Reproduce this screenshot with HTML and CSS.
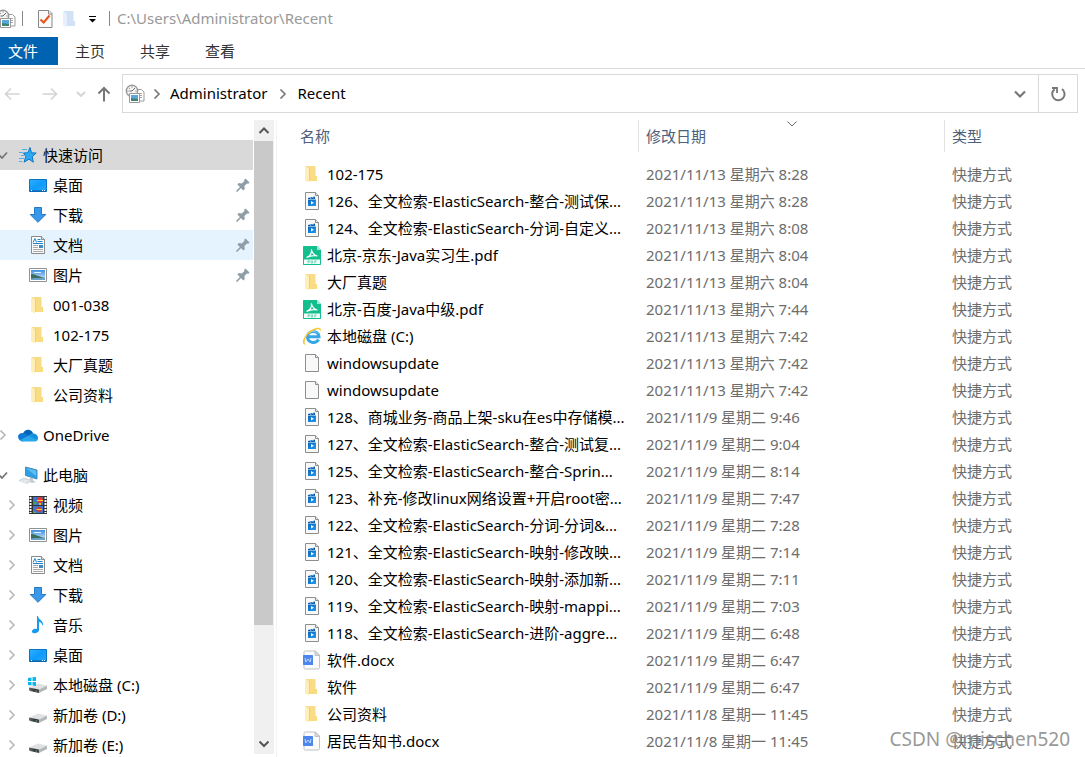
FILE: index.html
```html
<!DOCTYPE html>
<html lang="zh-CN">
<head>
<meta charset="utf-8">
<title>Recent</title>
<link rel="stylesheet" href="styles.css">
</head>
<body>
<svg class="sprite" aria-hidden="true">
  <defs>
    <linearGradient id="g-folder" x1="0" y1="0" x2="1" y2="1"><stop offset="0" stop-color="#f6dc8e"/><stop offset="1" stop-color="#fbdc7c"/></linearGradient>
    <linearGradient id="g-blue" x1="0" y1="0" x2="1" y2="1"><stop offset="0" stop-color="#2fb0ff"/><stop offset=".5" stop-color="#0f9bfb"/><stop offset="1" stop-color="#2aa7fb"/></linearGradient>
    <linearGradient id="g-sky" x1="0" y1="0" x2="0" y2="1"><stop offset="0" stop-color="#3f8fe0"/><stop offset="1" stop-color="#d9ecf8"/></linearGradient>
    <linearGradient id="g-disk" x1="0" y1="0" x2="1" y2="0"><stop offset="0" stop-color="#6b6f72"/><stop offset=".6" stop-color="#2f3336"/><stop offset="1" stop-color="#45494c"/></linearGradient>
    <linearGradient id="g-clip" x1="0" y1="0" x2="1" y2="1"><stop offset="0" stop-color="#0a66bd"/><stop offset="1" stop-color="#1c9bf0"/></linearGradient>
  </defs>
  <symbol id="i-folder" viewBox="0 0 20 20"><path d="M4 2h9.500v10H15v5H4z" fill="url(#g-folder)"/><path d="M3 2l4 2.500v14L3 16.500z" fill="#ffeeb8"/><path d="M7.500 4v13" stroke="#f0cf78"/></symbol>
  <symbol id="i-folder-pale" viewBox="0 0 20 20"><path d="M4 2h9.500v10H15v5H4z" fill="#d2e1f6"/><path d="M3 2l4 2.500v14L3 16.500z" fill="#e6effb"/></symbol>
  <symbol id="i-star" viewBox="0 0 20 20"><path d="M12 2.500l1.500 5.300 4.700.2-3.900 3.500 1 5.700-4.300-3-5 3 1.800-5.700L5.500 8l4.300-.2z" fill="#2da8f2" stroke="#0c78c7"/><path d="M4 4.500h5M1 7.500h4M3 10.500h3M1 13.500h5M1 16.500h3" stroke="#53aee8"/></symbol>
  <symbol id="i-desktop" viewBox="0 0 20 20"><path d="M1.500 4.500h17v12h-17z" fill="url(#g-blue)" stroke="#0a73c2"/><path d="M2 16h16" stroke="#075b9d"/><path d="M3 15.500h1M14 15.500h1M16 15.500h1" stroke="#fff"/></symbol>
  <symbol id="i-down" viewBox="0 0 20 20"><path d="M6.500 2.500h7v7h4.300L10 17.300 2.200 9.500h4.300z" fill="#3a98ea" stroke="#2579c4"/></symbol>
  <symbol id="i-doc" viewBox="0 0 20 20"><path d="M3.500 1.500h10l3 3v14h-13z" fill="#fbfbfb" stroke="#8a8a8a"/><path d="M13.500 1.500v3h3" fill="#ddd" stroke="#8a8a8a"/><path d="M5 7.500l2-4 1.500 4M9.500 4.500h3M9.500 6.500h5" fill="none" stroke="#2186cf"/><path d="M5 8.500h10" stroke="#2186cf"/><path d="M5 10.500h5M5 12.500h5M5 14.500h10M5 16.500h10" stroke="#aaa"/><path d="M11 10h4v3h-4z" fill="#3d8ec2"/></symbol>
  <symbol id="i-pic" viewBox="0 0 20 20"><path d="M1.500 3.500h17v13h-17z" fill="#fff" stroke="#919191"/><path d="M3 5h14v10H3z" fill="url(#g-sky)"/><path d="M3 9c4 0 7 2.500 14 4v1.500H3z" fill="#396e61"/><path d="M3 13.500c5-1 9 0 14-1V15H3z" fill="#6ba2c4"/><path d="M6 7.500h7" stroke="#e4f2ff"/></symbol>
  <symbol id="i-cloud" viewBox="0 0 20 20"><path d="M5 8.500C6 5 11 3 14 6.500c1 1.200 1 2 1 3.500L9 13z" fill="#0364b8"/><path d="M0 11.500C0 8.500 4 7 7 8.500l8 5-11 3C2 16 0 14 0 11.500z" fill="#0f78d4"/><path d="M12 10c3-3 7.500-1 8 3 .3 2-1 3.300-3 3.500H4.500c-1 0-2-.6-2.500-1.400z" fill="#28a8ea"/><path d="M11 11l3-2c3-1 5.500 1 6 4l-2 1.500z" fill="#1490df"/></symbol>
  <symbol id="i-pc" viewBox="0 0 20 20"><path d="M7.500 2l11.500 3v9L7.500 10.500z" fill="#2c9fe6" stroke="#4a8fb8"/><path d="M8 3l10 8V5.700z" fill="#5cc0f5"/><path d="M12 12.500l3 1v2l3 1.500-4 1-3-1.500z" fill="#c4cacd"/><path d="M1 15.500L6 13l8 2.500-5 3z" fill="#d5dadd" stroke="#c2c9cc" stroke-width=".6"/><path d="M3 15.500l6 2M5 14.500l6 2" stroke="#f4f6f7" stroke-width=".8"/></symbol>
  <symbol id="i-video" viewBox="0 0 20 20"><path d="M1 1h18v18H1z" fill="#333"/><path d="M5 2h10v8H5zM5 11h10v7H5z" fill="#3e73cf"/><path d="M2.500 2v16M17.500 2v16" stroke="#fff" stroke-width="2" stroke-dasharray="2 1"/><ellipse cx="12" cy="5" rx="3" ry="3" fill="#e43b2d"/><path d="M9 5h6v1H9zM8 14h6v1H8z" fill="#ffd128"/><path d="M11 8h2v2h-2z" fill="#f4b81f"/><circle cx="7" cy="8" r="1.500" fill="#43a83b"/><circle cx="11" cy="14.500" r="2.500" fill="#d13d32"/><path d="M9 14h5v1H9z" fill="#ffd128"/><path d="M5 16l4 2H5z" fill="#5fae4a"/></symbol>
  <symbol id="i-music" viewBox="0 0 20 20"><path d="M10 1c0 4 6 4 5 10-1-2-2-4-4-4v8c0 3-6 4.500-7 2-.6-2.500 3-4 5-3V1z" fill="#149bef"/></symbol>
  <symbol id="i-disk" viewBox="0 0 20 20"><path d="M1 12.500L10 8.500l9 2-8 4z" fill="#dfe1e3"/><path d="M1 12.500l10 2v3.500L2 16l-1-1z" fill="url(#g-disk)"/><path d="M11 14.500l8-4v3.500l-8 4z" fill="#b4b7b9"/><path d="M7.500 16h1.200" stroke="#7de07a"/></symbol>
  <symbol id="i-sysdisk" viewBox="0 0 20 20"><use href="#i-disk"/><path d="M0 3l3.500-.5v3.500H0zM4.500 2.300L8 2v4H4.500zM0 7h3.500v3.500L0 10zM4.500 7H8v4l-3.500-.4z" fill="#08b5ec"/></symbol>
  <symbol id="i-pin" viewBox="0 0 16 16"><path d="M10.500 1.500l4 4-1.200 1.200-1.300-.2-2.600 2.600.4 3-1.400 1.400-6-6 1.400-1.400 3 .4 2.600-2.600-.2-1.200z" fill="#8e9da6"/><path d="M6 10l-4.500 4.500" stroke="#8e9da6" stroke-width="1.600"/></symbol>
  <symbol id="i-page" viewBox="0 0 20 20"><path d="M3.500 1.500h10l3 3v14h-13z" fill="#f8f8f8" stroke="#8e8e8e"/><path d="M13.500 1.500v3h3" fill="#e6e6e6" stroke="#8e8e8e"/></symbol>
  <symbol id="i-clip" viewBox="0 0 20 20"><use href="#i-page"/><path d="M6 7l7-1.500V8H6z" fill="#0b58a8"/><path d="M6 8.500h8V15H6z" fill="url(#g-clip)"/><path d="M8 6.500l1 1.300M10.500 6l1 1.300" stroke="#8fd0fb"/><path d="M9 10l3 1.700L9 13.500z" fill="#fff"/></symbol>
  <symbol id="i-pdf" viewBox="0 0 20 20"><path d="M2 1h13l4 4v14c0 .6-.4 1-1 1H2c-.6 0-1-.4-1-1V2c0-.6.400-1 1-1z" fill="#13bf8c"/><path d="M15 1v4h4z" fill="#a3ead3"/><path d="M4.500 12.500C8 11 10 8 9.300 4.500 10.500 9 12.500 10.500 15.500 11 11 10 8 10.800 4.500 12.500z" fill="none" stroke="#fff" stroke-width="1.100"/><path d="M2 14.500h16v4.500H2z" fill="#f3fcf9"/><path d="M6 18.300v-2.600h1.500v1.300H6M9.200 15.900v2.200h1.300v-2.200zM12.700 18.300v-2.500h1.800M12.700 17h1.500" fill="none" stroke="#4fcfa9" stroke-width=".7"/></symbol>
  <symbol id="i-ie" viewBox="0 0 20 20"><path d="M16.500 13.500c-3 5-11 3.500-11-2.700 0-6.800 11.500-7 11.500 0H6" fill="none" stroke="#35a6e6" stroke-width="3"/><path d="M6.500 7.800C9 4.500 13 4.500 15.500 7.300" fill="none" stroke="#8bd4f8"/><path d="M4 18.500c-7 .5-1-11.500 6-15C16 .4 20.500 1.200 18.500 5.500c.3-4.500-8-2-12.500 3C2.500 13 1.500 17.500 4 18.500z" fill="#f8c838"/></symbol>
  <symbol id="i-docx" viewBox="0 0 20 20"><path d="M3.500 1h10l4 4v12.500c0 1-.5 1.500-1.500 1.500H3.500c-1 0-1.500-.5-1.500-1.500V2.500C2 1.500 2.500 1 3.500 1z" fill="#fbfbfc" stroke="#bfc1c5"/><path d="M13 1v4.500h4.500z" fill="#d8dadd" stroke="#bfc1c5"/><path d="M2 5h8c.6 0 1 .4 1 1v9H2c-.6 0-1-.4-1-1V6c0-.6.400-1 1-1z" fill="#4b86ec"/><path d="M3 8l.8 4 2.200-3 2.200 3L9 8" fill="none" stroke="#c4d8ff"/></symbol>
  <symbol id="i-recent" viewBox="0 0 20 20"><path d="M12.500 5.500h4l2.500 2.500v9h-6.500z" fill="#fff" stroke="#9b9b9b"/><path d="M14 9.500h3M14 11.500h3M14 13.500h3" stroke="#aaa"/><circle cx="7" cy="7" r="5.700" fill="#f5f5f5" stroke="#9a9a9a" stroke-width="1.400"/><path d="M7 2.500v1M7 10.500v1M2.500 7h1M10.500 7h1M4 4l.7.700M10 4L7 7H4.500" fill="none" stroke="#666"/><path d="M4.500 9.500h10v9h-10z" fill="#fff" stroke="#999"/><path d="M6 11h7v6H6z" fill="#5aa6df"/><path d="M6 14l7 1v2H6z" fill="#42826f"/></symbol>
  <symbol id="i-check" viewBox="0 0 20 20"><path d="M3.500 1.500h10.500l3 3v14H3.500z" fill="#fafafa" stroke="#888"/><path d="M13.500 1.500v3.500h3.500" fill="#eee" stroke="#888"/><path d="M5.500 10.500l3.200 3 5.800-7" fill="none" stroke="#ea5318" stroke-width="2"/></symbol>
  <symbol id="c-right" viewBox="0 0 10 10"><path d="M2.500 .5L7 5 2.500 9.500" fill="none" stroke="currentColor" stroke-width="1.600"/></symbol>
  <symbol id="c-down" viewBox="0 0 10 10"><path d="M1 3l4 4 4-4" fill="none" stroke="currentColor" stroke-width="1.800"/></symbol>
  <symbol id="c-check" viewBox="0 0 10 10"><path d="M1 5l3 3 5-5.500" fill="none" stroke="currentColor" stroke-width="1.800"/></symbol>
</svg>

<div class="window">
  <header class="titlebar">
    <svg class="icon edge"><use href="#i-recent"/></svg>
    <span class="rule"></span>
    <svg class="icon"><use href="#i-check"/></svg>
    <svg class="icon"><use href="#i-folder-pale"/></svg>
    <button class="plain" aria-label="自定义快速访问工具栏"><svg width="10" height="10" viewBox="0 0 10 10"><path d="M2 2.500h7" stroke="#000"/><path d="M2 5h7L5.500 8.500z"/></svg></button>
    <span class="rule"></span>
    <span class="title">C:\Users\Administrator\Recent</span>
  </header>

  <nav class="tabs">
    <button class="tab file">文件</button><button class="tab">主页</button><button class="tab">共享</button><button class="tab">查看</button>
  </nav>

  <div class="location">
    <div class="history">
      <button class="plain faint" aria-label="后退"><svg width="16" height="14" viewBox="0 0 16 14"><path d="M15.500 7H1.500M7 1.500L1.500 7 7 12.500" fill="none" stroke="currentColor" stroke-width="1.600"/></svg></button>
      <button class="plain faint" aria-label="前进"><svg width="16" height="14" viewBox="0 0 16 14"><path d="M.5 7h14M9 1.500L14.500 7 9 12.500" fill="none" stroke="currentColor" stroke-width="1.600"/></svg></button>
      <button class="plain faint" aria-label="最近位置"><svg class="chev"><use href="#c-down"/></svg></button>
      <button class="plain up" aria-label="上移"><svg width="14" height="16" viewBox="0 0 14 16"><path d="M7 15.500V2M1.500 7.500L7 2l5.500 5.500" fill="none" stroke="currentColor" stroke-width="2"/></svg></button>
    </div>
    <div class="address">
      <svg class="icon"><use href="#i-recent"/></svg>
      <svg class="chev"><use href="#c-right"/></svg>
      <a href="#">Administrator</a>
      <svg class="chev"><use href="#c-right"/></svg>
      <a href="#">Recent</a>
      <button class="plain drop" aria-label="展开"><svg width="14" height="14" viewBox="0 0 14 14"><path d="M2 4.500L7 9.500l5-5" fill="none" stroke="currentColor" stroke-width="2.200"/></svg></button>
      <button class="plain refresh" aria-label="刷新"><svg width="18" height="18" viewBox="0 0 18 18"><path d="M13 4a6.200 6.200 0 1 1-7.500.2" fill="none" stroke="currentColor" stroke-width="2"/><path d="M3 3h5v5" fill="none" stroke="currentColor" stroke-width="1.800"/></svg></button>
    </div>
  </div>

  <div class="panes">
    <aside class="tree">
      <ul>
        <li class="row top selected"><svg class="chev"><use href="#c-check"/></svg><svg class="icon"><use href="#i-star"/></svg><span>快速访问</span></li>
        <li class="row"><i class="chev"></i><svg class="icon"><use href="#i-desktop"/></svg><span>桌面</span><svg class="pin"><use href="#i-pin"/></svg></li>
        <li class="row"><i class="chev"></i><svg class="icon"><use href="#i-down"/></svg><span>下载</span><svg class="pin"><use href="#i-pin"/></svg></li>
        <li class="row hover"><i class="chev"></i><svg class="icon"><use href="#i-doc"/></svg><span>文档</span><svg class="pin"><use href="#i-pin"/></svg></li>
        <li class="row"><i class="chev"></i><svg class="icon"><use href="#i-pic"/></svg><span>图片</span><svg class="pin"><use href="#i-pin"/></svg></li>
        <li class="row"><i class="chev"></i><svg class="icon"><use href="#i-folder"/></svg><span>001-038</span></li>
        <li class="row"><i class="chev"></i><svg class="icon"><use href="#i-folder"/></svg><span>102-175</span></li>
        <li class="row"><i class="chev"></i><svg class="icon"><use href="#i-folder"/></svg><span>大厂真题</span></li>
        <li class="row"><i class="chev"></i><svg class="icon"><use href="#i-folder"/></svg><span>公司资料</span></li>
      </ul>
      <ul>
        <li class="row top closed"><svg class="chev"><use href="#c-right"/></svg><svg class="icon"><use href="#i-cloud"/></svg><span>OneDrive</span></li>
      </ul>
      <ul>
        <li class="row top"><svg class="chev"><use href="#c-check"/></svg><svg class="icon"><use href="#i-pc"/></svg><span>此电脑</span></li>
        <li class="row"><svg class="chev"><use href="#c-right"/></svg><svg class="icon"><use href="#i-video"/></svg><span>视频</span></li>
        <li class="row"><svg class="chev"><use href="#c-right"/></svg><svg class="icon"><use href="#i-pic"/></svg><span>图片</span></li>
        <li class="row"><svg class="chev"><use href="#c-right"/></svg><svg class="icon"><use href="#i-doc"/></svg><span>文档</span></li>
        <li class="row"><svg class="chev"><use href="#c-right"/></svg><svg class="icon"><use href="#i-down"/></svg><span>下载</span></li>
        <li class="row"><svg class="chev"><use href="#c-right"/></svg><svg class="icon"><use href="#i-music"/></svg><span>音乐</span></li>
        <li class="row"><svg class="chev"><use href="#c-right"/></svg><svg class="icon"><use href="#i-desktop"/></svg><span>桌面</span></li>
        <li class="row"><svg class="chev"><use href="#c-right"/></svg><svg class="icon"><use href="#i-sysdisk"/></svg><span>本地磁盘 (C:)</span></li>
        <li class="row"><svg class="chev"><use href="#c-right"/></svg><svg class="icon"><use href="#i-disk"/></svg><span>新加卷 (D:)</span></li>
        <li class="row"><svg class="chev"><use href="#c-right"/></svg><svg class="icon"><use href="#i-disk"/></svg><span>新加卷 (E:)</span></li>
      </ul>
    </aside>

    <div class="scrollbar">
      <button class="plain" aria-label="向上滚动"><svg width="12" height="12" viewBox="0 0 12 12"><path d="M1.500 8L6 3.500 10.500 8" fill="none" stroke="currentColor" stroke-width="2"/></svg></button>
      <div class="thumb"></div>
      <div class="track"></div>
      <button class="plain" aria-label="向下滚动"><svg width="12" height="12" viewBox="0 0 12 12"><path d="M1.500 3.500L6 8l4.500-4.500" fill="none" stroke="currentColor" stroke-width="2"/></svg></button>
    </div>

    <main class="files">
      <table>
        <colgroup><col class="c-name"><col class="c-date"><col class="c-type"></colgroup>
        <thead>
          <tr><th><div class="head">名称</div></th><th><div class="head ruled">修改日期<svg class="sort" viewBox="0 0 10 6"><path d="M.5.5L5 5 9.500.5" fill="none" stroke="#666"/></svg></div></th><th><div class="head ruled">类型</div></th></tr>
        </thead>
        <tbody>
          <tr><td><div class="name"><svg class="icon"><use href="#i-folder"/></svg>102-175</div></td><td>2021/11/13 星期六 8:28</td><td>快捷方式</td></tr>
          <tr><td><div class="name"><svg class="icon"><use href="#i-clip"/></svg>126、全文检索-ElasticSearch-整合-测试保...</div></td><td>2021/11/13 星期六 8:28</td><td>快捷方式</td></tr>
          <tr><td><div class="name"><svg class="icon"><use href="#i-clip"/></svg>124、全文检索-ElasticSearch-分词-自定义...</div></td><td>2021/11/13 星期六 8:08</td><td>快捷方式</td></tr>
          <tr><td><div class="name"><svg class="icon"><use href="#i-pdf"/></svg>北京-京东-Java实习生.pdf</div></td><td>2021/11/13 星期六 8:04</td><td>快捷方式</td></tr>
          <tr><td><div class="name"><svg class="icon"><use href="#i-folder"/></svg>大厂真题</div></td><td>2021/11/13 星期六 8:04</td><td>快捷方式</td></tr>
          <tr><td><div class="name"><svg class="icon"><use href="#i-pdf"/></svg>北京-百度-Java中级.pdf</div></td><td>2021/11/13 星期六 7:44</td><td>快捷方式</td></tr>
          <tr><td><div class="name"><svg class="icon"><use href="#i-ie"/></svg>本地磁盘 (C:)</div></td><td>2021/11/13 星期六 7:42</td><td>快捷方式</td></tr>
          <tr><td><div class="name"><svg class="icon"><use href="#i-page"/></svg>windowsupdate</div></td><td>2021/11/13 星期六 7:42</td><td>快捷方式</td></tr>
          <tr><td><div class="name"><svg class="icon"><use href="#i-page"/></svg>windowsupdate</div></td><td>2021/11/13 星期六 7:42</td><td>快捷方式</td></tr>
          <tr><td><div class="name"><svg class="icon"><use href="#i-clip"/></svg>128、商城业务-商品上架-sku在es中存储模...</div></td><td>2021/11/9 星期二 9:46</td><td>快捷方式</td></tr>
          <tr><td><div class="name"><svg class="icon"><use href="#i-clip"/></svg>127、全文检索-ElasticSearch-整合-测试复...</div></td><td>2021/11/9 星期二 9:04</td><td>快捷方式</td></tr>
          <tr><td><div class="name"><svg class="icon"><use href="#i-clip"/></svg>125、全文检索-ElasticSearch-整合-Sprin...</div></td><td>2021/11/9 星期二 8:14</td><td>快捷方式</td></tr>
          <tr><td><div class="name"><svg class="icon"><use href="#i-clip"/></svg>123、补充-修改linux网络设置+开启root密...</div></td><td>2021/11/9 星期二 7:47</td><td>快捷方式</td></tr>
          <tr><td><div class="name"><svg class="icon"><use href="#i-clip"/></svg>122、全文检索-ElasticSearch-分词-分词&amp;...</div></td><td>2021/11/9 星期二 7:28</td><td>快捷方式</td></tr>
          <tr><td><div class="name"><svg class="icon"><use href="#i-clip"/></svg>121、全文检索-ElasticSearch-映射-修改映...</div></td><td>2021/11/9 星期二 7:14</td><td>快捷方式</td></tr>
          <tr><td><div class="name"><svg class="icon"><use href="#i-clip"/></svg>120、全文检索-ElasticSearch-映射-添加新...</div></td><td>2021/11/9 星期二 7:11</td><td>快捷方式</td></tr>
          <tr><td><div class="name"><svg class="icon"><use href="#i-clip"/></svg>119、全文检索-ElasticSearch-映射-mappi...</div></td><td>2021/11/9 星期二 7:03</td><td>快捷方式</td></tr>
          <tr><td><div class="name"><svg class="icon"><use href="#i-clip"/></svg>118、全文检索-ElasticSearch-进阶-aggre...</div></td><td>2021/11/9 星期二 6:48</td><td>快捷方式</td></tr>
          <tr><td><div class="name"><svg class="icon"><use href="#i-docx"/></svg>软件.docx</div></td><td>2021/11/9 星期二 6:47</td><td>快捷方式</td></tr>
          <tr><td><div class="name"><svg class="icon"><use href="#i-folder"/></svg>软件</div></td><td>2021/11/9 星期二 6:47</td><td>快捷方式</td></tr>
          <tr><td><div class="name"><svg class="icon"><use href="#i-folder"/></svg>公司资料</div></td><td>2021/11/8 星期一 11:45</td><td>快捷方式</td></tr>
          <tr><td><div class="name"><svg class="icon"><use href="#i-docx"/></svg>居民告知书.docx</div></td><td>2021/11/8 星期一 11:45</td><td>快捷方式</td></tr>
        </tbody>
      </table>
    </main>
  </div>
  <div class="watermark">CSDN @mischen520</div>
</div>
</body>
</html>
```
FILE: styles.css
```css
* { box-sizing: border-box; }

body {
  margin: 0;
  background: #fff;
  color: #000;
  font: 15px/20px "Noto Sans", "Noto Sans CJK SC", sans-serif;
}

button { font: inherit; color: inherit; }
ul { list-style: none; margin: 0; padding: 0; }
svg { display: block; flex: none; }
.sprite { position: absolute; width: 0; height: 0; }
.icon { width: 20px; height: 20px; }
.chev { width: 10px; height: 10px; flex: none; }

.plain {
  display: flex;
  align-items: center;
  justify-content: center;
  padding: 0;
  border: 0;
  background: none;
}

.window {
  position: relative;
  display: flex;
  flex-direction: column;
  height: 100vh;
  overflow: hidden;
}

/* Title bar */
.titlebar { display: flex; align-items: center; height: 37px; }
.titlebar .edge { margin-left: -4px; margin-right: 6px; }
.titlebar .rule { width: 1px; height: 15px; background: #888; }
.titlebar .rule + .icon { margin-left: 12px; margin-right: 5px; }
.titlebar .plain { margin: 0 12px 0 7px; }
.titlebar .title { margin-left: 7px; padding-bottom: 2px; color: #999; }

/* Ribbon tabs */
.tabs { display: flex; height: 32px; padding-bottom: 3px; border-bottom: 1px solid #dadada; }
.tab { padding: 0 18px 0 17px; border: 0; background: none; color: #333; }
.tab.file { padding: 0 20px 0 8px; background: #0063b1; color: #fff; }

/* Address row */
.location { display: flex; height: 51px; padding: 5px 7px 7px 0; flex: none; }
.history { display: grid; grid-template-columns: 24px 52px 10px 36px; }
.faint { color: #d4d4d4; }
.up { color: #777; }
.address {
  display: flex;
  flex: 1;
  align-items: center;
  padding-left: 2px;
  border: 1px solid #d9d9d9;
}
.address a { padding-bottom: 2px; color: #000; text-decoration: none; }
.address .chev { margin: 0 8px 0 7px; color: #777; }
.address a + .chev { margin: 0 9px 0 11px; }
.address .drop { width: 36px; margin-left: auto; color: #777; }
.address .refresh { width: 39px; align-self: stretch; border-left: 1px solid #d9d9d9; color: #777; }

/* Panes */
.panes { display: flex; flex: 1; min-height: 0; }

.tree { width: 253px; flex: none; padding-top: 20px; overflow: hidden; }
.tree ul { margin-bottom: 10px; }
.row { display: flex; align-items: center; height: 30px; padding: 0 0 0 7px; white-space: nowrap; }
.row .chev { margin-right: 11px; color: #b9b9b9; }
.row .icon { margin-right: 5px; }
.row.top { padding-left: 0; }
.row.top .chev { margin: 0 10px 0 -2px; color: #777; }
.row.top.closed .chev { color: #b9b9b9; }
.row.selected { background: #d9d9d9; }
.row.hover { background: #e5f3ff; }
.pin { width: 16px; height: 16px; margin: 0 2px 0 auto; }

.scrollbar {
  display: flex;
  flex-direction: column;
  flex: none;
  width: 20px;
  margin: 0 2px 3px 1px;
  background: #f0f0f0;
  color: #555;
}
.scrollbar .plain { height: 21px; flex: none; padding-right: 1px; }
.thumb { flex: 81.7 1 0; margin-right: 1px; background: #c9c9c9; }
.track { flex: 18.3 1 0; }

/* File list */
.files { flex: 1; min-width: 0; border-left: 1px solid #f3f3f3; overflow: hidden; }
.files table { width: 100%; table-layout: fixed; border-collapse: collapse; }
.c-name { width: 361px; }
.c-date { width: 306px; }
.files th { height: 40px; padding: 0; vertical-align: top; text-align: left; font-weight: 400; color: #4c607a; }
.head { position: relative; height: 32px; padding-left: 23px; line-height: 32px; }
.head.ruled { padding-left: 7px; border-left: 1px solid #e2e2e2; }
.sort { position: absolute; top: 1px; left: 50%; width: 10px; height: 6px; margin-left: -5px; }
.files td { height: 27px; padding: 0 0 0 8px; color: #6d6d6d; white-space: nowrap; overflow: hidden; }
.files td:first-child { padding-left: 25px; color: #000; }
.name { display: flex; align-items: center; }
.name .icon { margin-right: 5px; }

.watermark {
  position: absolute;
  right: 15px;
  bottom: 6px;
  font-size: 19px;
  line-height: 24px;
  color: #888;
  opacity: .85;
}
```
